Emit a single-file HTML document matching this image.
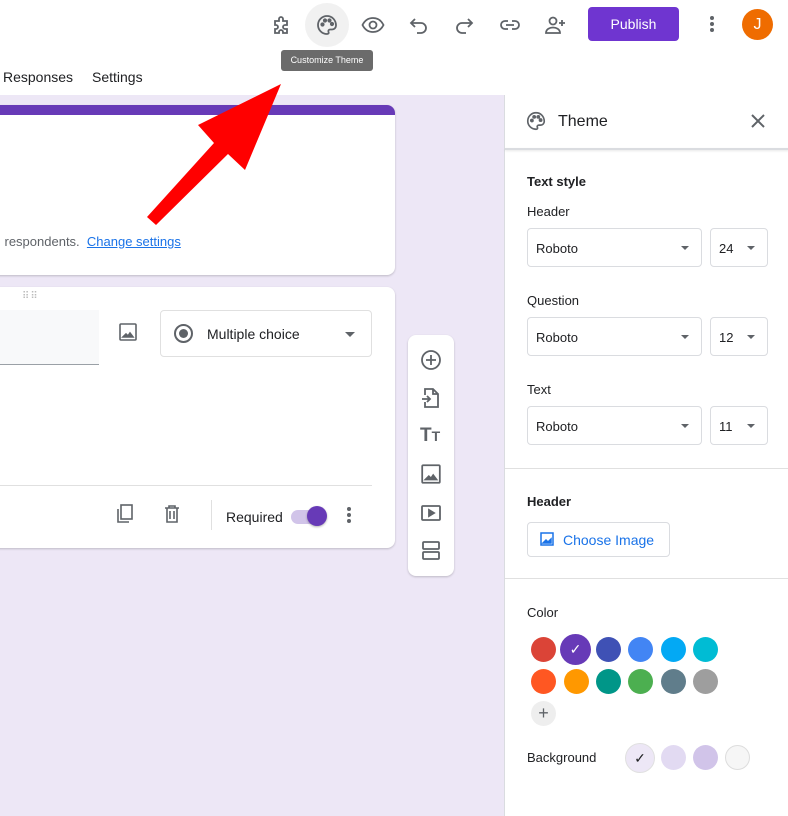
<!DOCTYPE html>
<html><head><meta charset="utf-8"><style>
*{box-sizing:border-box;margin:0;padding:0}
body{width:788px;height:816px;overflow:hidden;background:#fff;font-family:"Liberation Sans",Arial,sans-serif;color:#202124;position:relative}
.abs{position:absolute}
.bg{left:0;top:95px;width:504px;height:721px;background:#ede7f6}
.card{background:#fff;border-radius:8px;box-shadow:0 1px 2px rgba(0,0,0,.2)}
.panel{left:504px;top:95px;width:284px;height:721px;background:#fff;border-left:1px solid #dadce0}
.sel{position:absolute;border:1px solid #dadce0;border-radius:4px;height:39px;font-size:13px;padding:12px 8px}
.tri{position:absolute;width:0;height:0;border-left:4px solid transparent;border-right:4px solid transparent;border-top:4px solid #5f6368}
.lbl{position:absolute;font-size:14px;color:#202124}
.dot{position:absolute;width:25px;height:25px;border-radius:50%}
svg.i{position:absolute}
</style></head><body>
<div class="abs bg"></div>
<div class="abs" style="left:3px;top:69px;font-size:14px">Responses</div>
<div class="abs" style="left:92px;top:69px;font-size:14px">Settings</div>
<div class="abs" style="left:305px;top:3px;width:44px;height:44px;border-radius:50%;background:#f1f1f1"></div>
<svg class="i" style="left:270px;top:13px" width="24" height="24" viewBox="0 0 24 24" fill="none" stroke="#5f6368" stroke-width="1.8"><path d="M5 8h4V6a2 2 0 0 1 4 0v2h4v4h-2a2 2 0 0 0 0 4h2v4h-4v-1a2 2 0 0 0-4 0v1H5v-4h1a2 2 0 0 0 0-4H5z"/></svg>
<svg class="i" style="left:315px;top:13px" width="24" height="24" viewBox="0 0 24 24" fill="none" stroke="#5f6368" stroke-width="1.8"><path d="M12 3a9 9 0 0 0 0 18c1.5 0 2-1 1.5-2s0-2.5 1.5-2.5H17a4 4 0 0 0 4-4C21 7 17 3 12 3z"/><circle cx="7.5" cy="11.5" r="1.2" fill="#5f6368"/><circle cx="10" cy="7.5" r="1.2" fill="#5f6368"/><circle cx="14.5" cy="7.5" r="1.2" fill="#5f6368"/><circle cx="17" cy="11" r="1.2" fill="#5f6368"/></svg>
<svg class="i" style="left:361px;top:13px" width="24" height="24" viewBox="0 0 24 24" fill="none" stroke="#5f6368" stroke-width="1.8"><path d="M1.5 12C4 7 8 5 12 5s8 2 10.5 7C20 17 16 19 12 19s-8-2-10.5-7z"/><circle cx="12" cy="12" r="3.5"/></svg>
<svg class="i" style="left:407px;top:13px" width="24" height="24" viewBox="0 0 24 24" fill="none" stroke="#5f6368" stroke-width="1.8"><path d="M8 6L4 10l4 4M4 10h10a5 5 0 0 1 0 10h-4"/></svg>
<svg class="i" style="left:452px;top:13px" width="24" height="24" viewBox="0 0 24 24" fill="none" stroke="#5f6368" stroke-width="1.8"><path d="M16 6l4 4-4 4M20 10H10a5 5 0 0 0 0 10h4"/></svg>
<svg class="i" style="left:498px;top:13px" width="24" height="24" viewBox="0 0 24 24" fill="none" stroke="#5f6368" stroke-width="1.8"><path d="M10 8H7a4 4 0 0 0 0 8h3M14 8h3a4 4 0 0 1 0 8h-3M8 12h8"/></svg>
<svg class="i" style="left:543px;top:13px" width="24" height="24" viewBox="0 0 24 24" fill="none" stroke="#5f6368" stroke-width="1.8"><circle cx="10" cy="8" r="3.5"/><path d="M3 20c0-4 4-5.5 7-5.5s7 1.5 7 5.5zM19 7v6M16 10h6"/></svg>
<div class="abs" style="left:588px;top:7px;width:91px;height:34px;background:#6f35d0;border-radius:4px;color:#fff;font-size:14px;text-align:center;line-height:34px">Publish</div>
<div class="abs" style="left:710px;top:16px;width:4px;height:4px;border-radius:50%;background:#5f6368;box-shadow:0 6px 0 #5f6368,0 12px 0 #5f6368"></div>
<div class="abs" style="left:742px;top:9px;width:31px;height:31px;border-radius:50%;background:#ef6c00;color:#fff;font-size:16px;text-align:center;line-height:31px">J</div>
<div class="abs" style="left:281px;top:50px;width:92px;height:21px;background:#6b6b6b;border-radius:3px;color:#fff;font-size:9px;text-align:center;line-height:21px">Customize Theme</div>

<div class="abs card" style="left:-10px;top:105px;width:405px;height:170px;overflow:hidden">
 <div style="height:10px;background:#673ab7"></div>
 <div class="abs" style="left:8px;top:129px;font-size:13px;color:#5f6368;white-space:nowrap">l respondents.&nbsp; <span style="color:#1a73e8;text-decoration:underline">Change settings</span></div>
</div>
<div class="abs card" style="left:-10px;top:287px;width:405px;height:261px">
 <div class="abs" style="left:32px;top:4px;color:#bbb;font-size:10px;letter-spacing:1px">⠿⠿</div>
 <div class="abs" style="left:0;top:23px;width:109px;height:55px;background:#f8f9fa;border-bottom:1px solid #9aa0a6"></div>
 <svg class="i" style="left:128px;top:35px" width="20" height="20" viewBox="0 0 20 20" fill="none" stroke="#5f6368" stroke-width="1.6"><rect x="2" y="2" width="16" height="16" rx="1"/><path d="M5 15l3-3 2 2 2-3 3 4z" fill="#5f6368"/></svg>
 <div class="abs" style="left:170px;top:23px;width:212px;height:47px;border:1px solid #e0e0e0;border-radius:4px">
  <div class="abs" style="left:13px;top:13px;width:19px;height:19px;border-radius:50%;border:2px solid #5f6368"><div style="margin:3px;width:9px;height:9px;border-radius:50%;background:#5f6368"></div></div>
  <div class="abs" style="left:46px;top:15px;font-size:14px">Multiple choice</div>
  <div class="tri" style="left:184px;top:21px;border-width:5px 5px 0"></div>
 </div>
 <div class="abs" style="left:10px;top:198px;width:372px;border-top:1px solid #e0e0e0"></div>
 <svg class="i" style="left:125px;top:216px" width="20" height="22" viewBox="0 0 20 22" fill="none" stroke="#5f6368" stroke-width="1.6"><rect x="6" y="2" width="11" height="14"/><path d="M3 6v13h11"/></svg>
 <svg class="i" style="left:172px;top:216px" width="20" height="22" viewBox="0 0 20 22" fill="none" stroke="#5f6368" stroke-width="1.6"><path d="M3 5h14M7 5V3h6v2M5 5v14h10V5M8 8v8M12 8v8"/></svg>
 <div class="abs" style="left:221px;top:213px;height:30px;border-left:1px solid #e0e0e0"></div>
 <div class="abs" style="left:236px;top:222px;font-size:14px">Required</div>
 <div class="abs" style="left:301px;top:223px;width:34px;height:14px;border-radius:7px;background:#d1c4e9"></div>
 <div class="abs" style="left:317px;top:219px;width:20px;height:20px;border-radius:50%;background:#673ab7;box-shadow:0 1px 2px rgba(0,0,0,.3)"></div>
 <div class="abs" style="left:357px;top:220px;width:4px;height:4px;border-radius:50%;background:#5f6368;box-shadow:0 6px 0 #5f6368,0 12px 0 #5f6368"></div>
</div>
<div class="abs card" style="left:408px;top:335px;width:46px;height:241px">
 <svg class="i" style="left:11px;top:13px" width="24" height="24" viewBox="0 0 24 24" fill="none" stroke="#5f6368" stroke-width="1.8"><circle cx="12" cy="12" r="9"/><path d="M12 7v10M7 12h10"/></svg>
 <svg class="i" style="left:11px;top:51px" width="24" height="24" viewBox="0 0 24 24" fill="none" stroke="#5f6368" stroke-width="1.8"><path d="M6 9V3h8l5 5v13H6v-5M14 3v5h5M3 13h8M8 10l3 3-3 3"/></svg>
 <div class="abs" style="left:12px;top:90px;font-size:19px;font-weight:bold;color:#5f6368">T<span style="font-size:14px">T</span></div>
 <svg class="i" style="left:12px;top:128px" width="22" height="22" viewBox="0 0 20 20" fill="none" stroke="#5f6368" stroke-width="1.6"><rect x="2" y="2" width="16" height="16" rx="1"/><path d="M5 15l3-3 2 2 2-3 3 4z" fill="#5f6368"/></svg>
 <svg class="i" style="left:11px;top:166px" width="24" height="24" viewBox="0 0 24 24" fill="none" stroke="#5f6368" stroke-width="1.8"><rect x="3" y="5" width="18" height="14" rx="1"/><path d="M10 9v6l5-3z" fill="#5f6368"/></svg>
 <svg class="i" style="left:11px;top:204px" width="24" height="24" viewBox="0 0 24 24" fill="none" stroke="#5f6368" stroke-width="1.8"><rect x="4" y="3" width="16" height="7" rx="1"/><rect x="4" y="13" width="16" height="7" rx="1"/></svg>
</div>

<svg class="i" style="left:0;top:0" width="400" height="260"><polygon points="281,84 245,170 228,154 156,225 147,217 214,143 198,125" fill="#ff0000"/></svg>

<div class="abs panel">
 <svg class="i" style="left:20px;top:15px" width="22" height="22" viewBox="0 0 24 24" fill="none" stroke="#5f6368" stroke-width="1.8"><path d="M12 3a9 9 0 0 0 0 18c1.5 0 2-1 1.5-2s0-2.5 1.5-2.5H17a4 4 0 0 0 4-4C21 7 17 3 12 3z"/><circle cx="7.5" cy="11.5" r="1.2" fill="#5f6368"/><circle cx="10" cy="7.5" r="1.2" fill="#5f6368"/><circle cx="14.5" cy="7.5" r="1.2" fill="#5f6368"/><circle cx="17" cy="11" r="1.2" fill="#5f6368"/></svg>
 <div class="lbl" style="left:53px;top:18px;font-size:16px">Theme</div>
 <svg class="i" style="left:244px;top:17px" width="18" height="18" viewBox="0 0 18 18" stroke="#5f6368" stroke-width="2"><path d="M3 3l12 12M15 3L3 15"/></svg>
 <div class="abs" style="left:0;top:53px;width:284px;height:2px;background:#dadce0;box-shadow:0 1px 2px rgba(0,0,0,.1)"></div>
 <div class="lbl" style="left:22px;top:78px;font-weight:bold;font-size:13px;top:79px">Text style</div>
 <div class="lbl" style="left:22px;top:109px;font-size:13px">Header</div>
 <div class="sel" style="left:22px;top:133px;width:175px">Roboto<div class="tri" style="left:153px;top:17px"></div></div>
 <div class="sel" style="left:205px;top:133px;width:58px">24<div class="tri" style="left:36px;top:17px"></div></div>
 <div class="lbl" style="left:22px;top:198px;font-size:13px">Question</div>
 <div class="sel" style="left:22px;top:222px;width:175px">Roboto<div class="tri" style="left:153px;top:17px"></div></div>
 <div class="sel" style="left:205px;top:222px;width:58px">12<div class="tri" style="left:36px;top:17px"></div></div>
 <div class="lbl" style="left:22px;top:287px;font-size:13px">Text</div>
 <div class="sel" style="left:22px;top:311px;width:175px">Roboto<div class="tri" style="left:153px;top:17px"></div></div>
 <div class="sel" style="left:205px;top:311px;width:58px">11<div class="tri" style="left:36px;top:17px"></div></div>
 <div class="abs" style="left:0;top:373px;width:284px;border-top:1px solid #e0e0e0"></div>
 <div class="lbl" style="left:22px;top:399px;font-weight:bold;font-size:13px">Header</div>
 <div class="abs" style="left:22px;top:427px;width:143px;height:35px;border:1px solid #dadce0;border-radius:4px;color:#1a73e8;font-size:14px;padding:9px 0 0 35px">Choose Image</div>
 <svg class="i" style="left:35px;top:437px" width="14" height="14" viewBox="0 0 14 14" fill="none" stroke="#1a73e8" stroke-width="1.5"><rect x="1" y="1" width="12" height="12"/><path d="M3 11l3-3 2 2 3-3v4z" fill="#1a73e8"/></svg>
 <div class="abs" style="left:0;top:483px;width:284px;border-top:1px solid #e0e0e0"></div>
 <div class="lbl" style="left:22px;top:510px;font-size:13px">Color</div>
 <div class="dot" style="left:26px;top:542px;background:#db4437"></div>
 <div class="dot" style="left:55px;top:539px;width:31px;height:31px;background:#673ab7;color:#fff;text-align:center;line-height:31px;font-size:14px">✓</div>
 <div class="dot" style="left:91px;top:542px;background:#3f51b5"></div>
 <div class="dot" style="left:123px;top:542px;background:#4285f4"></div>
 <div class="dot" style="left:156px;top:542px;background:#03a9f4"></div>
 <div class="dot" style="left:188px;top:542px;background:#00bcd4"></div>
 <div class="dot" style="left:26px;top:574px;background:#ff5722"></div>
 <div class="dot" style="left:59px;top:574px;background:#ff9800"></div>
 <div class="dot" style="left:91px;top:574px;background:#009688"></div>
 <div class="dot" style="left:123px;top:574px;background:#4caf50"></div>
 <div class="dot" style="left:156px;top:574px;background:#607d8b"></div>
 <div class="dot" style="left:188px;top:574px;background:#9e9e9e"></div>
 <div class="dot" style="left:26px;top:606px;background:#eeeeee;color:#5f6368;text-align:center;line-height:25px;font-size:18px">+</div>
 <div class="lbl" style="left:22px;top:655px;font-size:13px">Background</div>
 <div class="dot" style="left:120px;top:648px;width:30px;height:30px;background:#ede7f6;border:1px solid #e0e0e0;text-align:center;line-height:28px;font-size:14px">✓</div>
 <div class="dot" style="left:156px;top:650px;background:#e2daf2"></div>
 <div class="dot" style="left:188px;top:650px;background:#d1c4e9"></div>
 <div class="dot" style="left:220px;top:650px;background:#f6f6f6;border:1px solid #ddd"></div>
</div>
</body></html>
